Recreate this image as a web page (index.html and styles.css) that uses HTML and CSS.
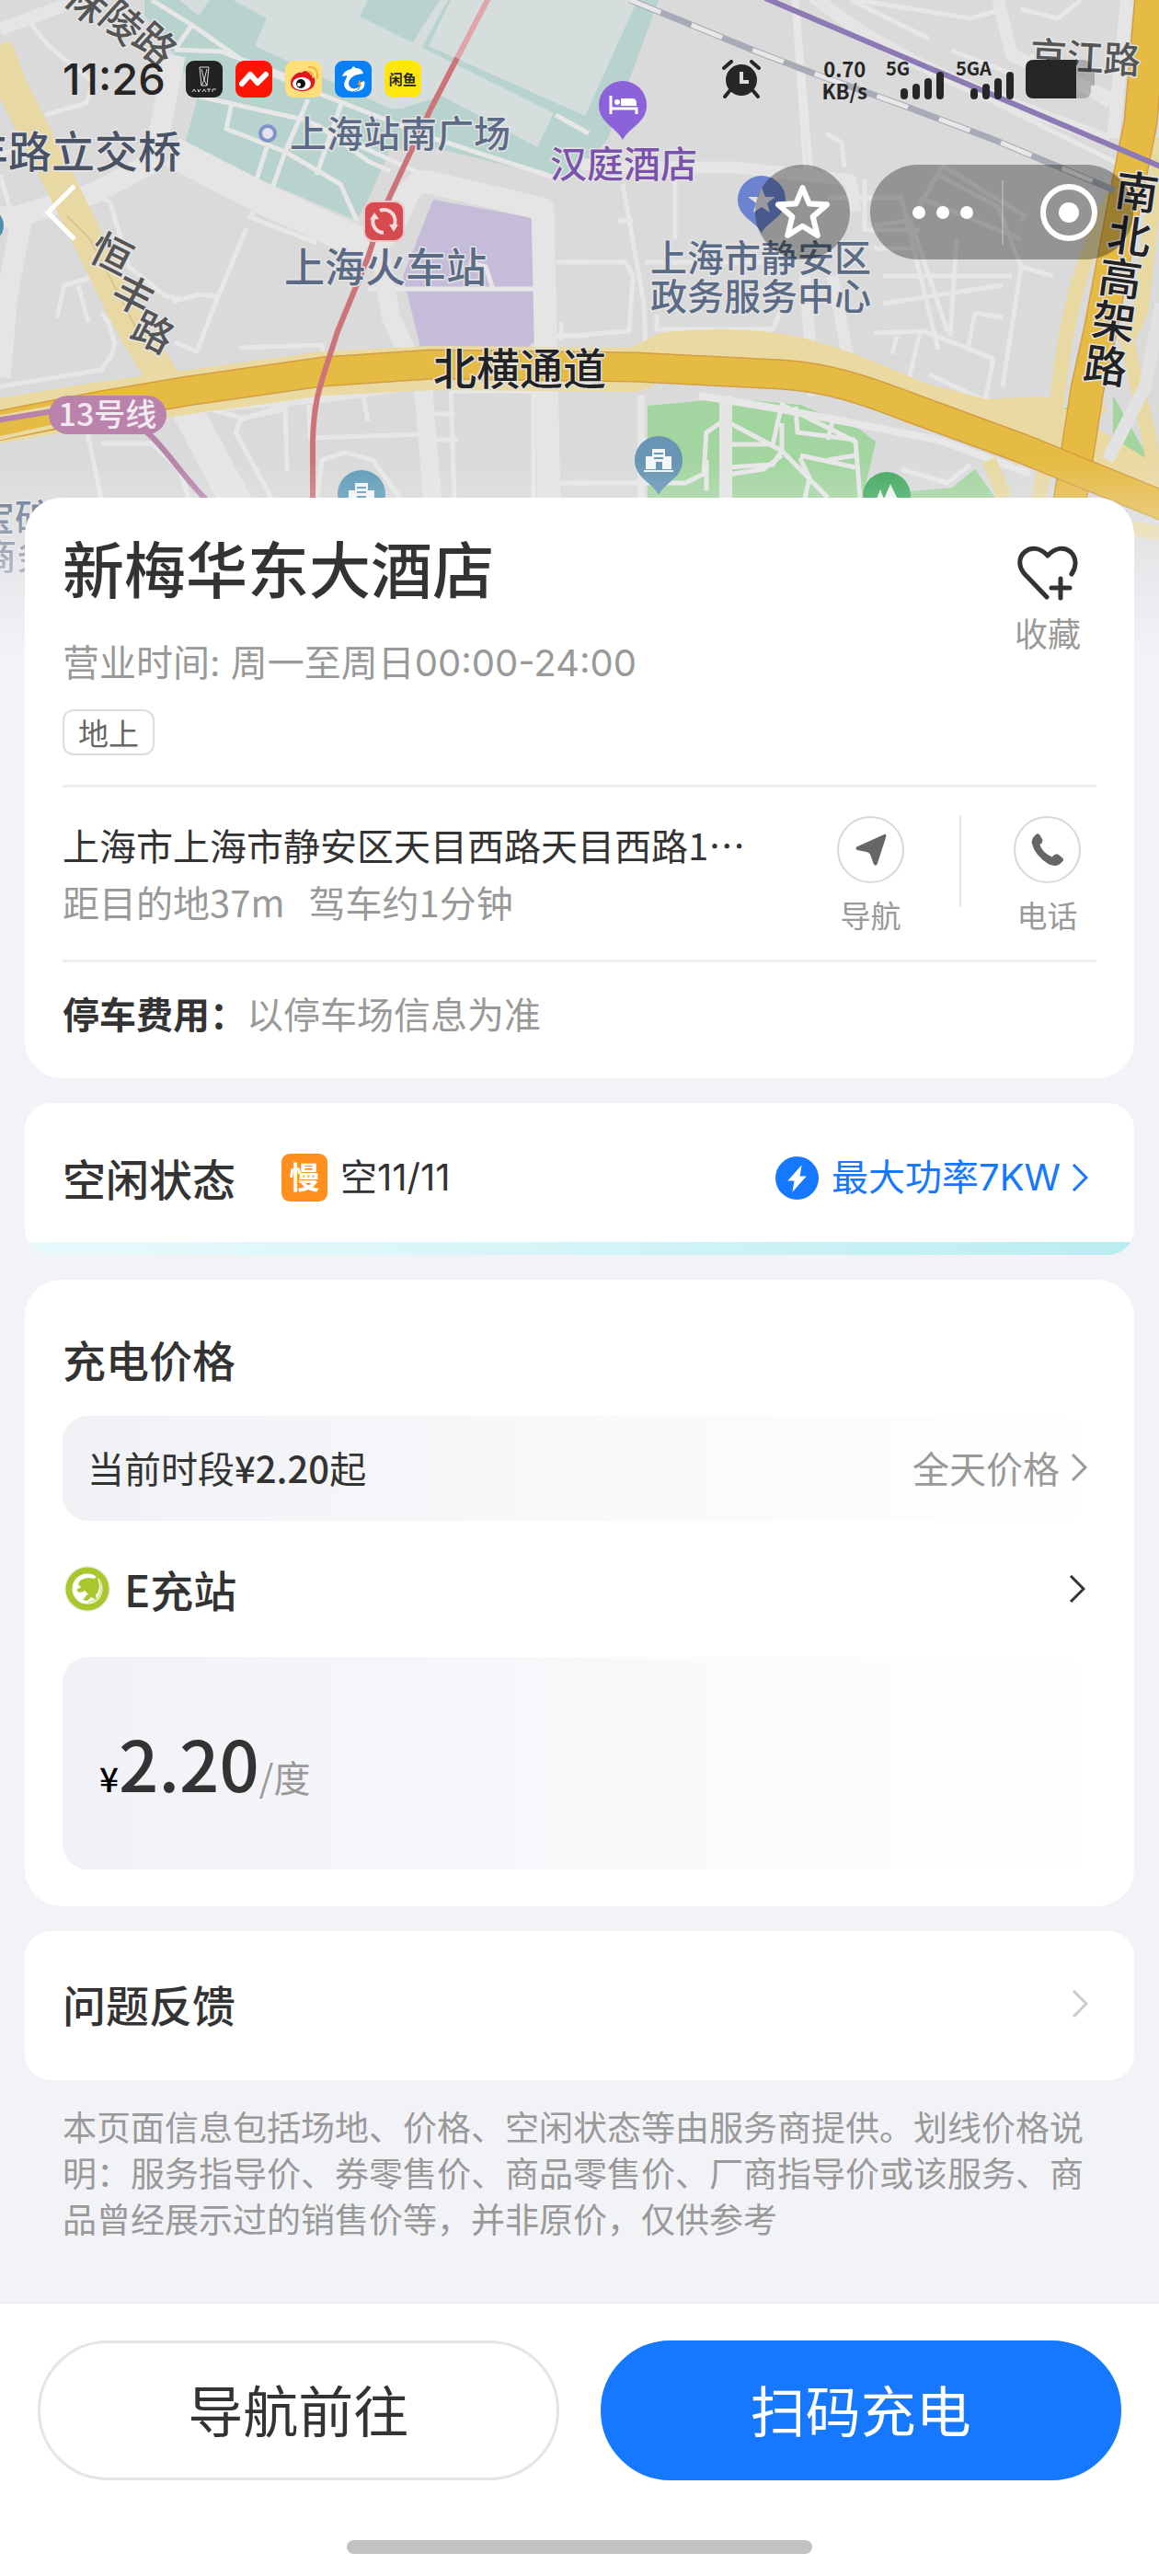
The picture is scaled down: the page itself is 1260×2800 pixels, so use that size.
FILE: index.html
```html
<!DOCTYPE html>
<html lang="zh-CN">
<head>
    <meta charset="UTF-8">
    <meta name="viewport" content="width=device-width, initial-scale=1.0">
    <title>新梅华东大酒店 - 充电站详情</title>
    <link rel="stylesheet" href="styles.css">
</head>
<body>
    <!-- 顶部地图 -->
    <div class="map" aria-hidden="true">
        <svg viewBox="0 0 1260 720" preserveAspectRatio="xMidYMin slice">
            <rect width="1260" height="720" fill="#dadada"/>

            <!-- 车站广场 -->
            <path d="M157 0H716L661 150 636 183 604 193 470 160 424 163 402 213 388 240 200 160 215 105 190 60 157 17Z" fill="#b8d3ce"/>
            <path d="M195 0H228L216 17ZM253 0H355L602 123 584 160 480 104 436 118 424 118 277 50 290 20ZM490 0H693L636 126 466 50ZM478 0H487L457 54 447 49Z" fill="#d5dedc"/>
            <path d="M355 0H400L390 20Z" fill="#d5dedc"/>
            <path d="M471 217 580 237 582 370 570 381H458L438 300Z" fill="#c5bcd9"/>
            <path d="M704 441 791 433 870 440 935 467 952 480 938 541H704ZM980 535 1035 530 1060 510 1082 541H980ZM1090 462 1170 440 1150 490 1120 495ZM1210 430 1250 500 1210 495Z" fill="#a3d5a0"/>

            <!-- 小路 -->
            <g fill="none" stroke="#e7e7e7" stroke-width="5" stroke-linejoin="round">
                <path d="M29 20 53 50 102 90 94 112 49 125M0 168 25 160M0 190 12 230M100 210 120 220 140 290 180 322 195 324M105 300 70 310 62 345M85 310 96 350M187 328 216 320 236 322M278 225 272 236 344 264M268 248 236 325 214 382 190 372"/>
                <path d="M165 0 210 28 270 70 330 95 470 150 600 192M190 54 240 56 310 82M210 25 190 54M217 105 330 130 470 195M252 112 246 140 310 165 370 200 388 240M290 160 278 198M310 165 296 205M335 108 310 165M372 110 344 190M344 135 400 175 424 186M604 125 640 145"/>
                <path d="M400 314H582M510 285 528 290 536 314M605 285H640M605 365H640M610 350V370M260 378 350 375 352 395M0 420 110 402 122 385 125 370M125 375 118 350 110 340M95 470 118 580M110 482H165L195 510 205 541M212 440 265 455 310 441M310 441 312 512M310 445 262 455 256 470 300 550M336 440 337 476 460 472M395 430 400 458M345 541 350 500 375 492 405 500 435 541M490 425H580V541M470 450H495M470 478H498M490 425 494 541M600 525H640"/>
                <path d="M866 0 882 190M863 0 876 190M925 0 1010 42M880 0 1008 75 1240 190M932 0 1055 20 1090 10M1034 55 1100 80M1110 10 1150 20 1175 0M1120 60 1205 115M898 145 915 155 918 182M734 190V260M677 200 700 330 702 380M672 240 688 240M702 285H850M620 285H680L688 300 684 360 620 365M714 342V358H840L848 340M1024 180 1000 225M1024 180 1115 235 1110 240M1020 190 1085 225 1110 290 1090 420M900 215H980L1020 380M940 195V250H1000M950 245 990 240 1030 360M950 270H1000M960 300H1100M960 330 1090 310M1000 215 1110 260M1110 290 1145 300M950 362 1005 360 1080 390M1010 407 1080 440M1000 362 985 425M975 365 970 385M1080 390 1070 440M1060 340 1052 380M1040 260 1033 365M1090 345 1060 340"/>
                <path d="M790 458 850 490 900 541M790 483H840L850 440 930 480 935 541M865 442 867 470 930 478M905 458 900 478M850 460V490L840 505 790 508M900 500 930 495M870 495 930 508M870 498 880 520 875 541M790 516 830 510 850 495M620 525H745L765 515 768 470 790 455M768 500V533M980 510 1030 525 1055 505"/>
            </g>
            <path d="M789 430V541" stroke="#e4e4e4" stroke-width="14" fill="none"/>
            <path d="M697 430V541M760 430 850 445 1020 478 1120 515" stroke="#e7e7e7" stroke-width="8" fill="none"/>

            <!-- 主路 -->
            <g fill="none" stroke="#e5e5e5" stroke-linejoin="round">
                <path d="M85 0 0 32" stroke-width="14"/>
                <path d="M190 60 174 140 163 178 102 210 20 235 0 236M24 235 8 320 0 410" stroke-width="23"/>
                <path d="M187 165 290 218 405 270" stroke-width="34"/>
                <path d="M395 262C440 270 430 200 462 197L590 227 597 541" stroke-width="25"/>
                <path d="M412 265 425 345 460 420 470 541" stroke-width="20"/>
                <path d="M190 420 264 560" stroke-width="34"/>
                <path d="M220 442 350 432 470 415" stroke-width="12"/>
                <path d="M630 178 665 182 800 182 925 196 930 230M875 300 885 430M905 300 930 430" stroke-width="13"/>
                <path d="M890 0C960 60 1060 100 1205 152M1085 0 1100 60 1214 110M1225 0 1210 150" stroke-width="14"/>
            </g>

            <!-- 高架与快速路 -->
            <g fill="none" stroke-linejoin="round">
                <path d="M-4 50 12 93 66 200 140 350 186 425" stroke="#e8d9a4" stroke-width="34"/>
                <path d="M73 235 98 260 160 380" stroke="#d8c68c" stroke-width="2"/>
                <path d="M-4 458 105 440 351 406 469 400 690 402 725 385C850 372 900 398 1000 440L1070 458 1130 455 1300 560" stroke="#ead9a0" stroke-width="48"/>
                <path d="M1222 190C1180 270 1160 330 1150 430L1126 560M1262 150 1240 340 1225 370 1250 480 1262 560M1075 500 1092 541M1200 440 1100 500" stroke="#e8d8a2" stroke-width="16"/>
                <path d="M1252 -5 1240 133 1220 233 1196 360 1182 423 1163 545" stroke="#d39e45" stroke-width="37"/>
                <path d="M1252 -5 1240 133 1220 233 1196 360 1182 423 1163 545" stroke="#e6bb44" stroke-width="34"/>
                <path d="M-4 463 110 441 204 425 351 404 469 396 690 399 849 407C900 410 940 424 987 442L1110 487 1270 552" stroke="#d39e45" stroke-width="33"/>
                <path d="M-4 463 110 441 204 425 351 404 469 396 690 399 849 407C900 410 940 424 987 442L1110 487 1270 552" stroke="#e6bb44" stroke-width="30"/>
                <path d="M-4 454 60 442M-4 477 60 463" stroke="#ead9a0" stroke-width="4"/>
                <path d="M1262 330 1245 420 1204 500" stroke="#e2e2e2" stroke-width="14"/>
                <path d="M1220 572 1260 580" stroke="#ead9a0" stroke-width="16"/>
            </g>

            <!-- 轨道线路 -->
            <g fill="none">
                <path d="M685 0 722 15 820 55 885 80 983 115 1081 152 1212 207" stroke="#a6abb5" stroke-width="7"/>
                <path d="M685 0 722 15 820 55 885 80 983 115 1081 152 1212 207" stroke="#e8e8e8" stroke-width="5" stroke-dasharray="36 36"/>
                <path d="M832 -2 1262 181" stroke="#8d79b4" stroke-width="6"/>
                <path d="M531 -2 497 63" stroke="#dfa5a8" stroke-width="6"/>
                <path d="M497 63 469 117 416 230 400 280 367 360C350 415 341 430 340 480V545" stroke="#cd7479" stroke-width="6"/>
                <path d="M-4 457 57 447M157 468C175 480 200 520 226 545" stroke="#b684a8" stroke-width="6"/>
            </g>

            <!-- 地标图标 -->
            <circle cx="291" cy="145" r="8" fill="#e4e4ee" stroke="#8094cc" stroke-width="4"/>
            <circle cx="-14" cy="245" r="18" fill="#4f8fae"/>
            <rect x="396" y="219" width="43" height="43" rx="10" fill="#d64b4f" stroke="#ecc5c6" stroke-width="2"/>
            <g fill="none" stroke="#f3d9d9" stroke-width="4">
                <path d="M407 235A12 12 0 0 0 417 253M413 229A12 12 0 0 1 428 246"/>
            </g>
            <path d="M402 239 407 231 412 238ZM423 244 433 244 428 252Z" fill="#f3d9d9"/>
            <path d="M677 152C670 138 651 134 651 114A26 26 0 0 1 703 114C703 134 684 138 677 152Z" fill="#8b62d9"/>
            <path d="M664 104V124M664 118H692V124M664 115V111M671 113V111" fill="none" stroke="#fff" stroke-width="3"/>
            <path d="M675 107H687Q692 107 692 112V115H675Z" fill="#fff"/>
            <circle cx="671" cy="111" r="3" fill="#fff"/>
            <path d="M828 253C821 240 802 236 802 217A26 26 0 0 1 854 217C854 236 835 240 828 253Z" fill="#6c83cf"/>
            <path d="M828 204 832 214 843 214 834 221 837 231 828 225 819 231 822 221 813 214 824 214Z" fill="#e0e0e8"/>
            <path d="M716 538C709 524 690 520 690 500A26 26 0 0 1 742 500C742 520 723 524 716 538Z" fill="#6795b3"/>
            <path d="M702 510V496H709V488H723V496H730V510H720V502H713V510ZM700 511H732V513H700Z" fill="#f2f5f8"/>
            <path d="M711 493H721M711 498H721" stroke="#6795b3" stroke-width="2"/>
            <circle cx="393" cy="537" r="26" fill="#5f9bb9"/>
            <path d="M379 545V533H386V525H400V533H407V545Z" fill="#f2f5f8"/>
            <path d="M388 530H398M388 535H398M388 540H398" stroke="#5f9bb9" stroke-width="2"/>
            <circle cx="964" cy="539" r="26" fill="#42aa60"/>
            <path d="M952 545 957 532 962 545ZM960 545 968 526 977 545Z" fill="#eef6ee"/>

            <!-- 地名 -->
            <rect x="53" y="430" width="128" height="42" rx="21" fill="#b983ab"/>
            <text class="map-line" x="117" y="463" text-anchor="middle">13号线</text>
            <g class="map-label">
                <text x="315" y="160">上海站南广场</text>
                <text x="707" y="295">上海市静安区</text>
                <text x="707" y="337">政务服务中心</text>
                <text x="598" y="193" class="map-hotel">汉庭酒店</text>
                <text x="-24" y="577">宝矿</text>
                <text x="-22" y="619">商务</text>
                <text x="309" y="307" class="map-station">上海火车站</text>
                <text x="197" y="182" text-anchor="end" class="map-bridge">恒丰路立交桥</text>
            </g>
            <g class="map-road">
                <text x="471" y="418" class="map-express">北横通道</text>
                <text transform="translate(1119 74) rotate(3)" class="map-street">京江路</text>
                <g text-anchor="middle">
                    <text transform="translate(93 3) rotate(42)" y="15">秣</text>
                    <text transform="translate(132 25) rotate(42)" y="15">陵</text>
                    <text transform="translate(168 49) rotate(42)" y="15">路</text>
                    <text transform="translate(121 277) rotate(27)" y="15">恒</text>
                    <text transform="translate(145 322) rotate(27)" y="15">丰</text>
                    <text transform="translate(166 362) rotate(27)" y="15">路</text>
                </g>
            </g>
            <g class="map-road map-express" text-anchor="middle">
                <text transform="translate(1236 209) rotate(8)" y="17">南</text>
                <text transform="translate(1228 257) rotate(8)" y="17">北</text>
                <text transform="translate(1218 303) rotate(8)" y="17">高</text>
                <text transform="translate(1211 350) rotate(8)" y="17">架</text>
                <text transform="translate(1202 398) rotate(8)" y="17">路</text>
            </g>
        </svg>
    </div>

    <!-- 系统状态栏 -->
    <div class="status-bar">
        <span class="clock">11:26</span>
        <div class="app-icons">
            <svg viewBox="0 0 40 40">
                <rect width="40" height="40" rx="9" fill="#222"/>
                <path d="M15 7H25L23 27H17ZM17 9 20 21 23 9M20 21 17 27M20 21 23 27" fill="none" stroke="#ddd" stroke-width="1"/>
                <path d="M7 34 9 31 11 34M13 31 14 34 16 31M18 34 20 31 22 34M23 31H27M25 31V34M29 34V31H33" fill="none" stroke="#ddd" stroke-width="1"/>
            </svg>
            <svg viewBox="0 0 40 40">
                <rect width="40" height="40" rx="9" fill="#fc1505"/>
                <path d="M7 25 16 15 24 24 33 15" fill="none" stroke="#fff" stroke-width="6" stroke-linecap="round" stroke-linejoin="round"/>
            </svg>
            <svg viewBox="0 0 40 40">
                <rect width="40" height="40" rx="9" fill="#ffdf7a"/>
                <path d="M6 25C5 19 13 11 18 13 20 10 27 11 27 15 32 17 33 20 32 24 31 36 7 36 6 25Z" fill="#e21520"/>
                <ellipse cx="18" cy="25" rx="10" ry="7" fill="#fff"/>
                <circle cx="17" cy="25" r="5" fill="#111"/>
                <circle cx="15" cy="26" r="2" fill="#fff"/>
                <path d="M25 12Q30 12 30 18M26 7Q36 6 35 19" fill="none" stroke="#f5b13b" stroke-width="2" stroke-linecap="round"/>
            </svg>
            <svg viewBox="0 0 40 40">
                <rect width="40" height="40" rx="9" fill="#0a80f5"/>
                <path d="M8 17C10 12 13 10 18 9L20 6 23 8C28 8 30 11 31 14L25 15C20 16 15 20 15 25 16 31 22 32 27 28 24 35 14 35 11 29 8 23 14 19 13 16Z" fill="#fff"/>
                <path d="M18 33C26 34 29 29 27 24L32 22C34 29 29 35 18 33Z" fill="#fff"/>
                <path d="M27 20 25 26 29 28Z" fill="#f7941d"/>
            </svg>
            <span class="app-xianyu">闲鱼</span>
        </div>
        <svg class="alarm" viewBox="0 0 42 42">
            <circle cx="21" cy="22" r="17" fill="#262626"/>
            <path d="M2 9 10 2M40 9 32 2M8 34 3 40M34 34 39 40" stroke="#262626" stroke-width="4" stroke-linecap="round"/>
            <path d="M21 13V24H29" fill="none" stroke="#ddd" stroke-width="4"/>
        </svg>
        <span class="net-speed">0.70<br>KB/s</span>
        <div class="signal">
            <span>5G</span>
            <svg viewBox="0 0 48 30"><path d="M4 22V26M17 17V26M30 11V26M43 4V26" stroke="#262626" stroke-width="8" stroke-linecap="round"/></svg>
        </div>
        <div class="signal signal-wide">
            <span>5GA</span>
            <svg viewBox="0 0 48 30"><path d="M4 22V26M17 17V26M30 11V26M43 4V26" stroke="#262626" stroke-width="8" stroke-linecap="round"/></svg>
        </div>
        <svg class="battery" viewBox="0 0 75 42">
            <path d="M9 0H62Q71 0 71 9V14H75V28H71V33Q71 42 62 42H9Q0 42 0 33V9Q0 0 9 0Z" fill="#000" fill-opacity=".22"/>
            <path d="M9 0H55V42H9Q0 42 0 33V9Q0 0 9 0Z" fill="#262626"/>
        </svg>
    </div>

    <!-- 小程序导航 -->
    <header class="nav-bar">
        <button class="back" type="button" aria-label="返回">
            <svg viewBox="0 0 36 62"><path d="M33 2 4 31 33 60" fill="none" stroke="#fff" stroke-width="5"/></svg>
        </button>
        <button class="star" type="button" aria-label="收藏小程序">
            <svg viewBox="0 0 60 60"><path d="M30 4 37 21 56 22 41 35 46 55 30 45 14 55 19 35 4 22 23 21Z" fill="none" stroke="#fff" stroke-width="6" stroke-linejoin="round"/></svg>
        </button>
        <div class="capsule">
            <button class="more" type="button" aria-label="更多">
                <svg viewBox="0 0 70 70"><circle cx="9" cy="35" r="7" fill="#fff"/><circle cx="35" cy="35" r="7" fill="#fff"/><circle cx="61" cy="35" r="7" fill="#fff"/></svg>
            </button>
            <button class="close" type="button" aria-label="关闭">
                <svg viewBox="0 0 70 70"><circle cx="35" cy="35" r="28" fill="none" stroke="#fff" stroke-width="6"/><circle cx="35" cy="35" r="11" fill="#fff"/></svg>
            </button>
        </div>
    </header>

    <main class="content">
        <!-- 站点信息 -->
        <section class="card station">
            <div class="station-head">
                <div>
                    <h1>新梅华东大酒店</h1>
                    <p class="hours">营业时间: 周一至周日00:00-24:00</p>
                    <span class="tag">地上</span>
                </div>
                <button class="favorite" type="button">
                    <svg viewBox="0 0 66 60"><path d="M32 56 8 31C1 23 1 13 8 7 15 1 25 2 33 11 41 2 51 1 58 7 64 13 65 22 59 31" fill="none" stroke="#333" stroke-width="5" stroke-linejoin="round" stroke-linecap="round"/><path d="M37 46H57M47 36V57" stroke="#333" stroke-width="5" stroke-linecap="round"/></svg>
                    收藏
                </button>
            </div>
            <div class="station-address">
                <div class="address-text">
                    <p class="address">上海市上海市静安区天目西路天目西路1…</p>
                    <p class="distance"><span>距目的地37m</span><span>驾车约1分钟</span></p>
                </div>
                <div class="actions">
                    <button class="action" type="button">
                        <span class="action-icon"><svg viewBox="0 0 40 40"><path d="M35 2Q38 1 37 5L27 36Q25 39 23 36L19 25Q18 23 15 22L4 20Q1 18 4 16Z" fill="#666"/></svg></span>
                        导航
                    </button>
                    <button class="action" type="button">
                        <span class="action-icon"><svg viewBox="0 0 40 40"><path d="M6 3 8 1Q10 1 11 3L14 8Q15 11 11 14 14 23 25 28 29 23 32 25L37 29Q39 31 37 33 31 41 21 36 6 27 2 13 1 7 6 3Z" fill="#666"/></svg></span>
                        电话
                    </button>
                </div>
            </div>
            <p class="parking"><strong>停车费用：</strong>以停车场信息为准</p>
        </section>

        <!-- 空闲状态 -->
        <section class="card idle">
            <h2>空闲状态</h2>
            <span class="slow">慢</span>
            <span class="count">空11/11</span>
            <a class="power" href="#power">
                <svg class="bolt" viewBox="0 0 46 46"><circle cx="23" cy="23" r="23" fill="#1677ff"/><path d="M28 9 13 26H20L18 38 33 21H26Z" fill="#fff"/></svg>
                <span>最大功率7KW</span>
                <svg class="chevron" viewBox="0 0 18 30"><path d="M2 1 16 15 2 29"/></svg>
            </a>
        </section>

        <!-- 充电价格 -->
        <section class="card price">
            <h2>充电价格</h2>
            <div class="price-now">
                <span>当前时段<b>¥2.20</b>起</span>
                <a class="all-day" href="#all-day">全天价格 <svg class="chevron" viewBox="0 0 18 30"><path d="M2 1 16 15 2 29"/></svg></a>
            </div>
            <a class="provider" href="#provider">
                <svg class="provider-logo" viewBox="0 0 50 50">
                    <circle cx="25" cy="25" r="25" fill="#eef0ea"/>
                    <circle cx="25" cy="25" r="20" fill="#fff" stroke="#a9c82f" stroke-width="7"/>
                    <path d="M38 16A16 16 0 0 1 26 40" fill="none" stroke="#dbe7a4" stroke-width="2"/>
                    <path d="M17 16Q25 11 32 14L36 11 37 17Q40 26 34 32L35 37 29 34 21 26 15 20Z" fill="#a9c82f"/>
                    <path d="M22 21 13 26 16 29 21 28ZM28 30 24 32 20 37 25 38 30 33Z" fill="#a9c82f"/>
                </svg>
                <span>E充站</span>
                <svg class="chevron" viewBox="0 0 18 30"><path d="M2 1 16 15 2 29"/></svg>
            </a>
            <div class="price-box">
                <span class="yen">¥</span><span class="amount">2.20</span><span class="unit">/度</span>
            </div>
        </section>

        <!-- 问题反馈 -->
        <a class="card feedback" href="#feedback">
            <h2>问题反馈</h2>
            <svg class="chevron" viewBox="0 0 18 30"><path d="M2 1 16 15 2 29"/></svg>
        </a>

        <p class="notice">本页面信息包括场地、价格、空闲状态等由服务商提供。划线价格说明：服务指导价、券零售价、商品零售价、厂商指导价或该服务、商品曾经展示过的销售价等，并非原价，仅供参考</p>
    </main>

    <footer class="bottom-bar">
        <div class="bottom-buttons">
            <button class="btn" type="button">导航前往</button>
            <button class="btn btn-primary" type="button">扫码充电</button>
        </div>
        <div class="home-indicator"></div>
    </footer>
</body>
</html>
```
FILE: styles.css
```css
* {
    margin: 0;
    padding: 0;
    box-sizing: border-box;
}

body {
    position: relative;
    display: flex;
    flex-direction: column;
    min-height: 100vh;
    background: #f1f3f7;
    color: #333;
    font-family: "Noto Sans CJK SC", sans-serif;
    font-size: 40px;
    line-height: 60px;
}

button {
    border: none;
    background: none;
    color: inherit;
    font: inherit;
    cursor: pointer;
}

a {
    color: inherit;
    text-decoration: none;
}

svg {
    display: block;
}

/* 地图 */
.map {
    position: absolute;
    top: 0;
    left: 0;
    right: 0;
    z-index: -1;
    height: 720px;
    overflow: hidden;
}

.map::after {
    content: "";
    position: absolute;
    inset: 0;
    background: linear-gradient(to bottom, rgba(241, 243, 247, 0) 500px, #f1f3f7 710px);
}

.map svg {
    width: 100%;
    height: 100%;
}

.map-label,
.map-road {
    font-size: 40px;
    font-weight: 500;
    fill: #5b6b86;
    stroke: #e4e4e4;
    stroke-width: 3px;
    stroke-linejoin: round;
    paint-order: stroke;
}

.map-road {
    font-size: 44px;
    fill: #555;
}

.map-street {
    font-size: 40px;
}

.map-hotel {
    fill: #7b52ab;
}

.map-station {
    font-size: 44px;
}

.map-bridge {
    font-size: 47px;
    fill: #4a5366;
}

.map-express {
    font-size: 47px;
    fill: #222;
}

.map-line {
    font-size: 34px;
    font-weight: 500;
    fill: #f3e9f0;
}

/* 状态栏 */
.status-bar {
    display: flex;
    align-items: center;
    padding: 62px 70px 0 68px;
    height: 110px;
    color: #262626;
}

.clock {
    font-family: Inter, sans-serif;
    font-size: 47px;
    font-weight: 500;
}

.app-icons {
    display: flex;
    gap: 14px;
    margin-left: 22px;
    margin-right: auto;
}

.app-icons svg,
.app-xianyu {
    width: 40px;
    height: 40px;
}

.app-xianyu {
    border-radius: 9px;
    background: #ffe60f;
    font-size: 15px;
    font-weight: 700;
    line-height: 40px;
    text-align: center;
}

.alarm {
    width: 42px;
    height: 42px;
    margin-right: 67px;
}

.net-speed {
    font-size: 22px;
    font-weight: 700;
    line-height: 24px;
    text-align: center;
}

.signal {
    width: 64px;
    margin-left: 20px;
    font-size: 20px;
    font-weight: 700;
    line-height: 20px;
}

.signal span {
    display: block;
    height: 14px;
}

.signal svg {
    width: 48px;
    height: 30px;
    margin-left: auto;
}

.signal-wide {
    margin-left: 12px;
}

.battery {
    width: 75px;
    height: 42px;
    margin-left: 12px;
}

/* 导航栏 */
.nav-bar {
    display: flex;
    align-items: center;
    margin-top: 69px;
    padding: 0 28px 0 48px;
}

.back {
    width: 36px;
    margin-right: auto;
}

.star {
    width: 103px;
    height: 103px;
    padding: 18px 21px;
    border-radius: 50%;
    background: rgba(0, 0, 0, 0.32);
}

.capsule {
    display: flex;
    align-items: center;
    width: 286px;
    height: 103px;
    margin-left: 22px;
    border-radius: 52px;
    background: rgba(0, 0, 0, 0.32);
}

.capsule button {
    display: flex;
    justify-content: center;
    width: 50%;
}

.capsule .more {
    padding-left: 15px;
}

.capsule .close {
    border-left: 2px solid rgba(255, 255, 255, 0.25);
}

.capsule svg {
    width: 70px;
    height: 70px;
}

/* 卡片 */
.content {
    padding: 259px 27px 0;
}

.card {
    margin-bottom: 27px;
    padding: 41px;
    border-radius: 40px;
    background: #fff;
}

h1 {
    font-size: 67px;
    font-weight: 500;
    line-height: 72px;
}

h2 {
    font-size: 47px;
    font-weight: 500;
    line-height: 60px;
}

.chevron {
    width: 18px;
    height: 30px;
    fill: none;
    stroke: currentColor;
    stroke-width: 3;
}

.station {
    padding-top: 39px;
}

.station-head {
    display: flex;
    justify-content: space-between;
    align-items: flex-start;
    padding-bottom: 32px;
    border-bottom: 3px solid #eee;
}

.hours,
.count,
.power {
    font-family: Inter, "Noto Sans CJK SC", sans-serif;
}

.hours {
    margin-top: 42px;
    margin-bottom: 23px;
    line-height: 54px;
    color: #999;
}

.tag {
    display: block;
    width: fit-content;
    padding: 0 15px;
    border: 2px solid #ddd;
    border-radius: 12px;
    color: #666;
    font-size: 33px;
    line-height: 46px;
}

.favorite {
    margin-top: 13px;
    margin-right: 17px;
    font-size: 36px;
    line-height: 48px;
    color: #999;
}

.favorite svg {
    width: 66px;
    height: 60px;
    margin: 0 auto 10px;
}

.station-address {
    display: flex;
    justify-content: space-between;
    padding: 31px 0 25px;
    border-bottom: 3px solid #eee;
}

.address-text {
    line-height: 62px;
}

.distance {
    display: flex;
    gap: 26px;
    color: #999;
}

.actions {
    display: flex;
    gap: 119px;
    margin-right: 17px;
    position: relative;
}

.actions::before {
    content: "";
    position: absolute;
    top: 0;
    left: 50%;
    width: 2px;
    height: 98px;
    background: #e5e5e5;
}

.action {
    font-size: 33px;
    line-height: 48px;
    color: #999;
}

.action-icon {
    display: flex;
    align-items: center;
    justify-content: center;
    width: 73px;
    height: 73px;
    margin-bottom: 10px;
    border: 2px solid #d8d8d8;
    border-radius: 50%;
}

.action-icon svg {
    width: 38px;
    height: 38px;
}

.parking {
    padding-top: 25px;
    color: #999;
}

.parking strong {
    font-weight: 700;
    color: #333;
}

/* 空闲状态 */
.idle {
    display: flex;
    align-items: center;
    height: 165px;
    padding: 0 50px 3px 41px;
    border-radius: 28px;
    background: linear-gradient(#fff, #fff) top / 100% 151px no-repeat, linear-gradient(to right, #eafafc, #d6f5f7 45%, #b9edf2);
}

.slow {
    width: 50px;
    height: 52px;
    margin-left: 50px;
    margin-right: 14px;
    border-radius: 9px;
    background: #ff8f1f;
    color: #fff;
    font-size: 33px;
    font-weight: 700;
    line-height: 48px;
    text-align: center;
}

.power {
    display: flex;
    align-items: center;
    margin-left: auto;
    color: #1677ff;
}

.bolt {
    width: 47px;
    height: 47px;
    margin-right: 14px;
}

.power .chevron {
    margin-left: 12px;
}

/* 充电价格 */
.price {
    padding-top: 56px;
    padding-bottom: 40px;
}

.price-now {
    display: flex;
    align-items: center;
    justify-content: space-between;
    height: 114px;
    margin-top: 32px;
    padding: 0 10px 2px 27px;
    border-radius: 27px;
    background: linear-gradient(to right, #f1f2f6, #fff);
}

.price-now b {
    font-weight: 500;
}

.all-day {
    display: flex;
    align-items: center;
    gap: 12px;
    color: #999;
}

.provider {
    display: flex;
    align-items: center;
    height: 148px;
    padding-right: 12px;
    font-size: 47px;
    font-weight: 500;
}

.provider-logo {
    width: 50px;
    height: 50px;
    margin-left: 2px;
    margin-right: 15px;
}

.provider .chevron {
    margin-left: auto;
}

.price-box {
    display: flex;
    align-items: baseline;
    height: 231px;
    padding: 84px 40px 0;
    border-radius: 27px;
    background: linear-gradient(to right, #f1f2f7, #fff);
    line-height: 60px;
}

.yen {
    color: #000;
    font-size: 37px;
    font-weight: 500;
}

.amount {
    font-size: 76px;
    font-weight: 500;
}

.unit {
    color: #999;
    font-size: 40px;
}

/* 问题反馈 */
.feedback {
    display: flex;
    align-items: center;
    justify-content: space-between;
    height: 162px;
    margin-bottom: 25px;
    padding-right: 50px;
    padding-bottom: 45px;
    border-radius: 28px;
}

.feedback .chevron {
    color: #ccc;
}

.notice {
    padding: 0 41px;
    margin-bottom: 65px;
    color: #999;
    font-size: 37px;
    line-height: 50px;
}

/* 底部操作栏 */
.bottom-bar {
    margin-top: auto;
    padding: 40px 41px 24px;
    border-top: 2px solid #eee;
    background: #fff;
}

.bottom-buttons {
    display: flex;
    gap: 45px;
}

.btn {
    flex: 1;
    height: 152px;
    padding-bottom: 4px;
    border: 3px solid #e5e5e5;
    border-radius: 76px;
    font-size: 60px;
}

.btn-primary {
    border-color: #1677ff;
    background: #1677ff;
    color: #fff;
}

.home-indicator {
    width: 43%;
    height: 15px;
    margin: 65px auto 0;
    border-radius: 8px;
    background: #c2c2c2;
}
```
